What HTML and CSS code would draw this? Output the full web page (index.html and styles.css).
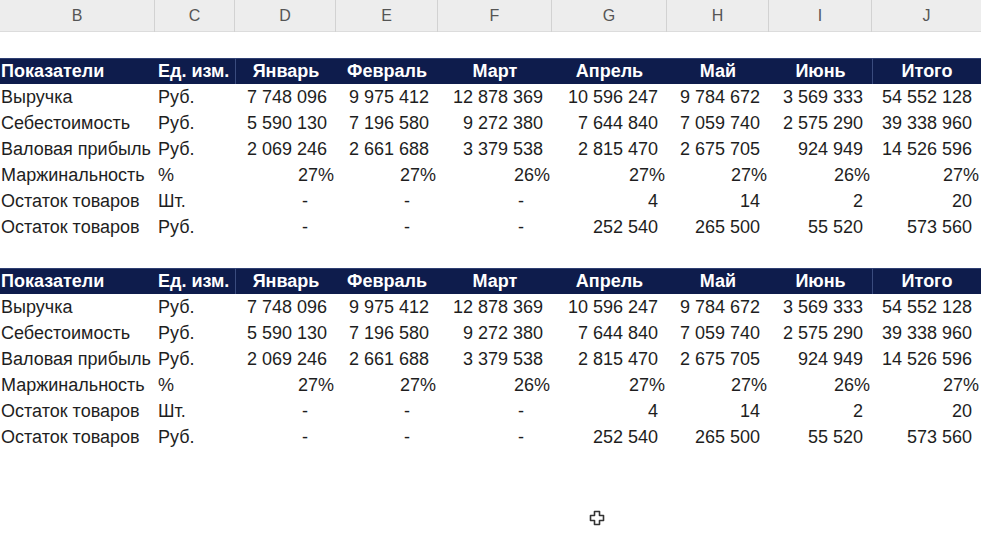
FILE: index.html
```html
<!DOCTYPE html>
<html lang="ru">
<head>
<meta charset="utf-8">
<title>Показатели</title>
<link rel="stylesheet" href="styles.css">
</head>
<body>
<div class="sheet">
  <div class="colhead">
    <div>B</div><div>C</div><div>D</div><div>E</div><div>F</div><div>G</div><div>H</div><div>I</div><div>J</div>
  </div>
  <div class="gap"></div>
  <div class="tbl">
    <div class="h l">Показатели</div><div class="h l u">Ед. изм.</div><div class="h c sep">Январь</div><div class="h c">Февраль</div><div class="h c">Март</div><div class="h c">Апрель</div><div class="h c">Май</div><div class="h c">Июнь</div><div class="h c sep">Итого</div>

    <div class="l">Выручка</div><div class="l u">Руб.</div><div class="n">7 748 096</div><div class="n">9 975 412</div><div class="n">12 878 369</div><div class="n">10 596 247</div><div class="n">9 784 672</div><div class="n">3 569 333</div><div class="n">54 552 128</div>

    <div class="l">Себестоимость</div><div class="l u">Руб.</div><div class="n">5 590 130</div><div class="n">7 196 580</div><div class="n">9 272 380</div><div class="n">7 644 840</div><div class="n">7 059 740</div><div class="n">2 575 290</div><div class="n">39 338 960</div>

    <div class="l">Валовая прибыль</div><div class="l u">Руб.</div><div class="n">2 069 246</div><div class="n">2 661 688</div><div class="n">3 379 538</div><div class="n">2 815 470</div><div class="n">2 675 705</div><div class="n">924 949</div><div class="n">14 526 596</div>

    <div class="l">Маржинальность</div><div class="l u">%</div><div class="p">27%</div><div class="p">27%</div><div class="p">26%</div><div class="p">27%</div><div class="p">27%</div><div class="p">26%</div><div class="p">27%</div>

    <div class="l">Остаток товаров</div><div class="l u">Шт.</div><div class="d">-</div><div class="d">-</div><div class="d">-</div><div class="n">4</div><div class="n">14</div><div class="n">2</div><div class="n">20</div>

    <div class="l">Остаток товаров</div><div class="l u">Руб.</div><div class="d">-</div><div class="d">-</div><div class="d">-</div><div class="n">252 540</div><div class="n">265 500</div><div class="n">55 520</div><div class="n">573 560</div>
  </div>
  <div class="gap gap2"></div>
  <div class="tbl">
    <div class="h l">Показатели</div><div class="h l u">Ед. изм.</div><div class="h c sep">Январь</div><div class="h c">Февраль</div><div class="h c">Март</div><div class="h c">Апрель</div><div class="h c">Май</div><div class="h c">Июнь</div><div class="h c sep">Итого</div>

    <div class="l">Выручка</div><div class="l u">Руб.</div><div class="n">7 748 096</div><div class="n">9 975 412</div><div class="n">12 878 369</div><div class="n">10 596 247</div><div class="n">9 784 672</div><div class="n">3 569 333</div><div class="n">54 552 128</div>

    <div class="l">Себестоимость</div><div class="l u">Руб.</div><div class="n">5 590 130</div><div class="n">7 196 580</div><div class="n">9 272 380</div><div class="n">7 644 840</div><div class="n">7 059 740</div><div class="n">2 575 290</div><div class="n">39 338 960</div>

    <div class="l">Валовая прибыль</div><div class="l u">Руб.</div><div class="n">2 069 246</div><div class="n">2 661 688</div><div class="n">3 379 538</div><div class="n">2 815 470</div><div class="n">2 675 705</div><div class="n">924 949</div><div class="n">14 526 596</div>

    <div class="l">Маржинальность</div><div class="l u">%</div><div class="p">27%</div><div class="p">27%</div><div class="p">26%</div><div class="p">27%</div><div class="p">27%</div><div class="p">26%</div><div class="p">27%</div>

    <div class="l">Остаток товаров</div><div class="l u">Шт.</div><div class="d">-</div><div class="d">-</div><div class="d">-</div><div class="n">4</div><div class="n">14</div><div class="n">2</div><div class="n">20</div>

    <div class="l">Остаток товаров</div><div class="l u">Руб.</div><div class="d">-</div><div class="d">-</div><div class="d">-</div><div class="n">252 540</div><div class="n">265 500</div><div class="n">55 520</div><div class="n">573 560</div>
  </div>
  <svg class="cursor" width="16" height="16" viewBox="0 0 16 16" aria-hidden="true">
    <path d="M5.5 1.5h5v4h4v5h-4v4h-5v-4h-4v-5h4z" fill="#fff" stroke="#333" stroke-width="1.6" stroke-linejoin="round"/>
  </svg>
</div>
</body>
</html>
```
FILE: styles.css
```css
html, body {
  margin: 0;
  padding: 0;
  background: #ffffff;
}
.sheet {
  position: relative;
  width: 981px;
  height: 552px;
  overflow: hidden;
  font-family: "Liberation Sans", Arial, sans-serif;
  color: #1e1e1e;
}
.colhead {
  display: grid;
  grid-template-columns: 155px 80px 101px 102px 114px 115px 102px 103px 109px;
  height: 32px;
  background: #ededed;
  border-bottom: 1px solid #dcdcdc;
  box-sizing: border-box;
}
.colhead div {
  border-right: 1px solid #d2d2d2;
  text-align: center;
  line-height: 32px;
  font-size: 16px;
  color: #555555;
}
.colhead div:last-child {
  border-right: none;
}
.gap {
  height: 26px;
}
.gap2 {
  height: 28px;
}
.tbl {
  display: grid;
  grid-template-columns: 155px 80px 101px 102px 114px 115px 102px 103px 109px;
  grid-auto-rows: 26px;
  font-size: 18px;
  line-height: 26px;
  white-space: nowrap;
}
.tbl > div {
  box-sizing: border-box;
  overflow: visible;
}
.h {
  background: #0e1c4c;
  color: #ffffff;
  font-weight: bold;
  border-top: 1px solid #2e3f72;
  line-height: 24px;
}
.sep {
  border-left: 1px solid #3a4b7e;
}
.l {
  text-align: left;
  padding-left: 1px;
}
.u {
  padding-left: 3px;
}
.c {
  text-align: center;
}
.n {
  text-align: right;
  padding-right: 9px;
}
.p {
  text-align: right;
  padding-right: 2px;
}
.d {
  text-align: right;
  padding-right: 28px;
}
.cursor {
  position: absolute;
  left: 589px;
  top: 510px;
}
```
